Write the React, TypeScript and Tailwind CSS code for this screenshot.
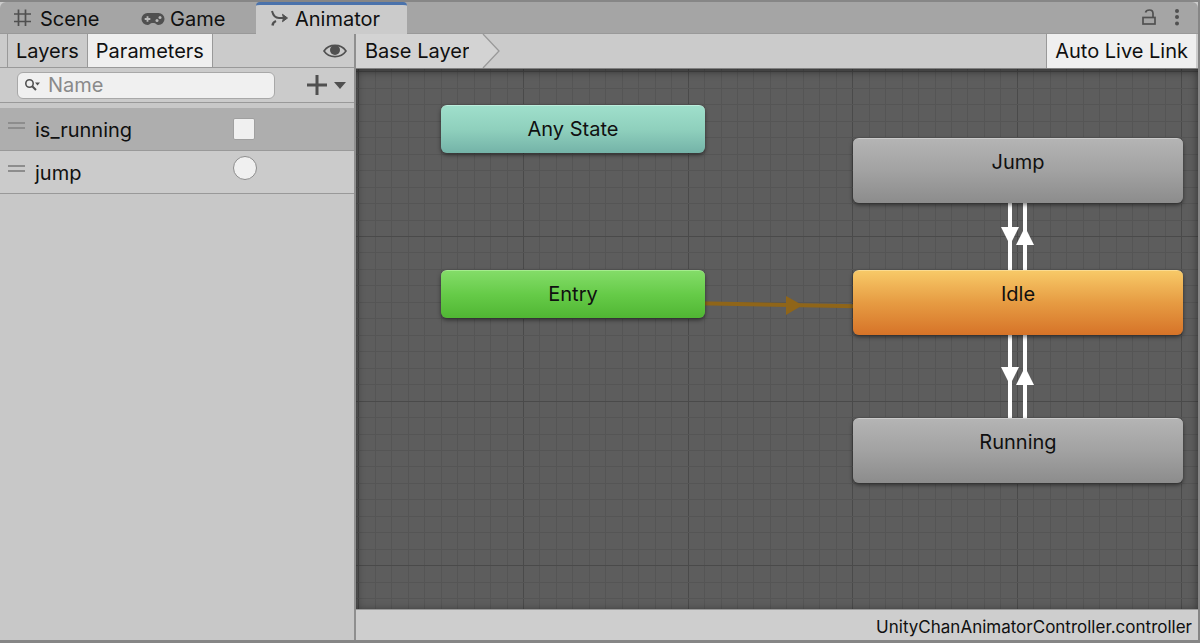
import clsx from "clsx";
import React, { useState } from "react";

type StateNode = {
  name: string;
  className: string;
};

const STATES: StateNode[] = [
  {
    name: "Any State",
    className:
      "left-[85px] top-[36px] w-[264px] h-12 from-[#9fdfcb] via-[#8fd0bd] to-[#74b3a8] border-t-[#bdeedd]",
  },
  {
    name: "Entry",
    className:
      "left-[85px] top-[201px] w-[264px] h-12 from-[#83dc68] via-[#66cb48] to-[#50b633] border-t-[#a5ec8e]",
  },
  {
    name: "Jump",
    className:
      "left-[497px] top-[69px] w-[330px] h-[65px] from-[#b4b4b4] via-[#a2a2a2] to-[#8c8c8c] border-t-[#cbcbcb]",
  },
  {
    name: "Idle",
    className:
      "left-[497px] top-[201px] w-[330px] h-[65px] from-[#f7c967] via-[#e69b42] to-[#d67328] border-t-[#fbdb90]",
  },
  {
    name: "Running",
    className:
      "left-[497px] top-[349px] w-[330px] h-[65px] from-[#b4b4b4] via-[#a2a2a2] to-[#8c8c8c] border-t-[#cbcbcb]",
  },
];

// ten cells between two strong lines
const GRID_STEP = 16.46;
const gridLines = (origin: number, count: number) =>
  Array.from({ length: count }, (_, i) => ({
    pos: Math.round(origin + (i - 10) * GRID_STEP),
    major: i % 10 === 0,
  }));

const Grid: React.FC = () => (
  <svg
    className="absolute inset-0 h-full w-full"
    shapeRendering="crispEdges"
    aria-hidden="true"
  >
    {gridLines(167, 130).map(({ pos, major }) => (
      <rect
        key={`v${pos}`}
        x={pos}
        width="1"
        height="100%"
        fill={major ? "#4a4a4a" : "#555555"}
      />
    ))}
    {gridLines(167, 90).map(({ pos, major }) => (
      <rect
        key={`h${pos}`}
        y={pos}
        width="100%"
        height="1"
        fill={major ? "#4a4a4a" : "#555555"}
      />
    ))}
  </svg>
);

const Transitions: React.FC = () => (
  <svg className="absolute inset-0 h-full w-full" aria-hidden="true">
    <path d="M340 234.3 L500 237.2" stroke="#8f6519" strokeWidth="4" />
    <path d="M430 227 L446.500 236.300 L430 246 Z" fill="#8f6519" />
    <g stroke="#fff" strokeWidth="4">
      <path d="M654 120 V360" />
      <path d="M669 120 V360" />
    </g>
    <g fill="#fff">
      <path d="M645 158 H663 L654 176 Z" />
      <path d="M660 176 H678 L669 158 Z" />
      <path d="M645 298 H663 L654 316 Z" />
      <path d="M660 316 H678 L669 298 Z" />
    </g>
  </svg>
);

const Handle: React.FC = () => (
  <span className="mb-2 h-[7px] w-[17px] shrink-0 border-y-2 border-[#8d8d8d]" />
);

export default function App() {
  const [tab, setTab] = useState("Parameters");
  const [selected, setSelected] = useState("Idle");
  const [query, setQuery] = useState("");

  return (
    <div className="flex h-screen flex-col border-t-2 border-r-2 border-b-3 border-[#868686] bg-[#cbcbcb] font-[Inter,sans-serif] text-xl leading-6 text-[#101010]">
      <header className="flex h-8 shrink-0 items-stretch rounded-t-md border-b border-[#999] bg-[#a5a5a5]">
        <nav className="flex items-stretch">
          <button className="flex w-32 items-center gap-2 pt-[2px] pl-3">
            <svg
              className="h-5 w-5"
              viewBox="0 0 20 20"
              stroke="#505050"
              strokeWidth="1.700"
              aria-hidden="true"
            >
              <path d="M6.500 0.500V17M13.500 0.500V17M2 5H19M2 12.500H19" />
            </svg>
            Scene
          </button>
          <button className="flex w-32 items-center gap-1 pt-[2px] pl-3">
            <svg className="h-4 w-[26px]" viewBox="0 0 26 16" aria-hidden="true">
              <path
                d="M7.500 2H18.500A6 6 0 0 1 18.500 14C16.500 14 15.500 12 14 12H12C10.500 12 9.500 14 7.500 14A6 6 0 0 1 7.500 2Z"
                fill="#505050"
              />
              <path
                d="M7.500 5.200V10.800M4.700 8H10.300"
                stroke="#b8b8b8"
                strokeWidth="1.800"
              />
              <circle cx="17" cy="9.500" r="1.500" fill="#b8b8b8" />
              <circle cx="20" cy="6.500" r="1.500" fill="#b8b8b8" />
            </svg>
            Game
          </button>
          <button className="-mb-px flex w-[151px] items-center gap-[3px] rounded-t-sm border-t-3 border-[#4a72ab] bg-[#cbcbcb] pb-[2px] pl-3">
            <svg
              className="h-5 w-6"
              viewBox="0 0 24 20"
              fill="none"
              stroke="#505050"
              strokeWidth="2"
              aria-hidden="true"
            >
              <path d="M4 2C5 6 7.500 9 11 9H18" />
              <path d="M4.500 16.500C4.800 14.300 6 12.800 8 12" strokeWidth="2.400" />
              <path
                d="M14.500 5.300L19.500 9L14.500 12.700L15.500 9Z"
                fill="#505050"
                strokeWidth="1"
              />
            </svg>
            Animator
          </button>
        </nav>
        <div className="ml-auto flex items-center gap-4 pr-[17px]">
          <button aria-label="Lock">
            <svg
              className="h-5 w-4"
              viewBox="0 0 16 20"
              fill="none"
              stroke="#505050"
              strokeWidth="1.700"
              aria-hidden="true"
            >
              <rect x="2" y="9.500" width="12" height="6.500" />
              <path d="M4.500 4.500C5 2.300 7 2 8.500 2C11 2 12 3.500 12 5.500V9.500" />
            </svg>
          </button>
          <button aria-label="More">
            <svg
              className="h-5 w-2"
              viewBox="0 0 8 20"
              fill="#505050"
              aria-hidden="true"
            >
              <circle cx="4" cy="3" r="2" />
              <circle cx="4" cy="9" r="2" />
              <circle cx="4" cy="15.500" r="2" />
            </svg>
          </button>
        </div>
      </header>

      <div className="flex min-h-0 flex-1">
        <aside className="flex w-[356px] shrink-0 flex-col border-r-2 border-[#8f8f8f] bg-[#c8c8c8]">
          <div className="flex h-[34px] shrink-0 items-stretch border-b border-[#999] bg-[#cbcbcb] pl-[7px]">
            {["Layers", "Parameters"].map((name) => (
              <button
                key={name}
                onClick={() => setTab(name)}
                className={clsx(
                  "border-l border-[#999] px-2 last-of-type:border-r",
                  tab === name && "bg-[#efefef]",
                )}
              >
                {name}
              </button>
            ))}
            <label className="ml-auto flex items-center pr-[5px]">
              <input
                type="checkbox"
                className="sr-only"
                aria-label="Show panel"
              />
              <svg className="h-5 w-7" viewBox="0 0 28 20" aria-hidden="true">
                <path
                  d="M3 10C8 2.500 20 2.500 25 10C20 17.500 8 17.500 3 10Z"
                  fill="none"
                  stroke="#505050"
                  strokeWidth="1.600"
                />
                <circle cx="14" cy="9" r="5" fill="#505050" />
              </svg>
            </label>
          </div>

          <div className="flex h-[35px] shrink-0 items-center border-b border-[#999] bg-[#cbcbcb] pl-[17px]">
            <label className="flex h-[27px] w-[258px] items-center gap-[7px] rounded-md border border-[#a8a8a8] bg-[#f0f0f0] pl-[7px]">
              <svg
                className="h-4 w-4 shrink-0"
                viewBox="0 0 16 16"
                fill="none"
                stroke="#505050"
                strokeWidth="1.600"
                aria-hidden="true"
              >
                <circle cx="4.500" cy="6.500" r="3.700" />
                <path d="M7.200 9.200L11 13" strokeWidth="2" />
                <path
                  d="M10 5.500H15L12.500 8.500Z"
                  fill="#505050"
                  stroke="none"
                />
              </svg>
              <input
                type="text"
                aria-label="Name"
                placeholder="Name"
                value={query}
                onChange={(e) => setQuery(e.target.value)}
                className="min-w-0 flex-1 outline-none placeholder:text-[#8a8a8a]"
              />
            </label>
            <button className="ml-auto pr-[6px]" aria-label="Add parameter">
              <svg className="h-6 w-11" viewBox="0 0 44 24" aria-hidden="true">
                <path
                  d="M13 2V22M3 12H23"
                  stroke="#505050"
                  strokeWidth="3"
                />
                <path d="M30 9H42L36 16Z" fill="#505050" />
              </svg>
            </button>
          </div>

          <ul className="pt-[5px]">
            <li className="flex h-[43px] items-center gap-[10px] border-b border-[#999] bg-[#aeaeae] pl-2">
              <Handle />
              <label htmlFor="is_running" className="w-[188px] pt-[2px]">
                is_running
              </label>
              <input
                id="is_running"
                type="checkbox"
                className="h-[22px] w-[22px] appearance-none rounded-xs border border-[#a0a0a0] bg-[#f0f0f0] checked:bg-[#505050]"
              />
            </li>
            <li className="flex h-[43px] items-center gap-[10px] border-b border-[#999] bg-[#cbcbcb] pl-2">
              <Handle />
              <label htmlFor="jump" className="w-[188px] pt-[2px]">
                jump
              </label>
              <input
                id="jump"
                type="radio"
                className="mb-2 h-6 w-6 appearance-none rounded-full border border-[#8d8d8d] bg-[#f0f0f0] checked:bg-[#505050]"
              />
            </li>
          </ul>
        </aside>

        <main className="flex min-w-0 flex-1 flex-col">
          <div className="flex h-[34px] shrink-0 items-stretch bg-[#cbcbcb]">
            <button className="flex items-center bg-[#d3d3d3] pl-[9px]">
              Base Layer
            </button>
            <svg className="h-full w-8" viewBox="0 0 32 34" aria-hidden="true">
              <path d="M0 0H14L30 17L14 34H0Z" fill="#d3d3d3" />
              <path
                d="M14 0L30 17L14 34"
                fill="none"
                stroke="#999"
                strokeWidth="1.300"
              />
            </svg>
            <button className="mr-[2px] ml-auto border-l border-[#999] bg-[#efefef] px-2">
              Auto Live Link
            </button>
          </div>

          <div className="relative min-h-0 flex-1 overflow-hidden border-t border-[#808080] bg-[#5d5d5d]">
            <Grid />
            <Transitions />
            {STATES.map((state) => (
              <button
                key={state.name}
                onClick={() => setSelected(state.name)}
                aria-pressed={selected === state.name}
                className={clsx(
                  "absolute flex items-start justify-center rounded-md border-t bg-linear-to-b pt-[11px] shadow-[0_2px_4px_rgba(0,0,0,0.5)]",
                  state.className,
                )}
              >
                {state.name}
              </button>
            ))}
            <div className="pointer-events-none absolute inset-0 shadow-[inset_0_2px_8px_rgba(0,0,0,0.5)]" />
          </div>

          <footer className="flex h-[31px] shrink-0 items-center justify-end border-t border-[#999] bg-[#cecece] pt-1 pr-[6px] text-[17px]">
            UnityChanAnimatorController.controller
          </footer>
        </main>
      </div>
    </div>
  );
}
